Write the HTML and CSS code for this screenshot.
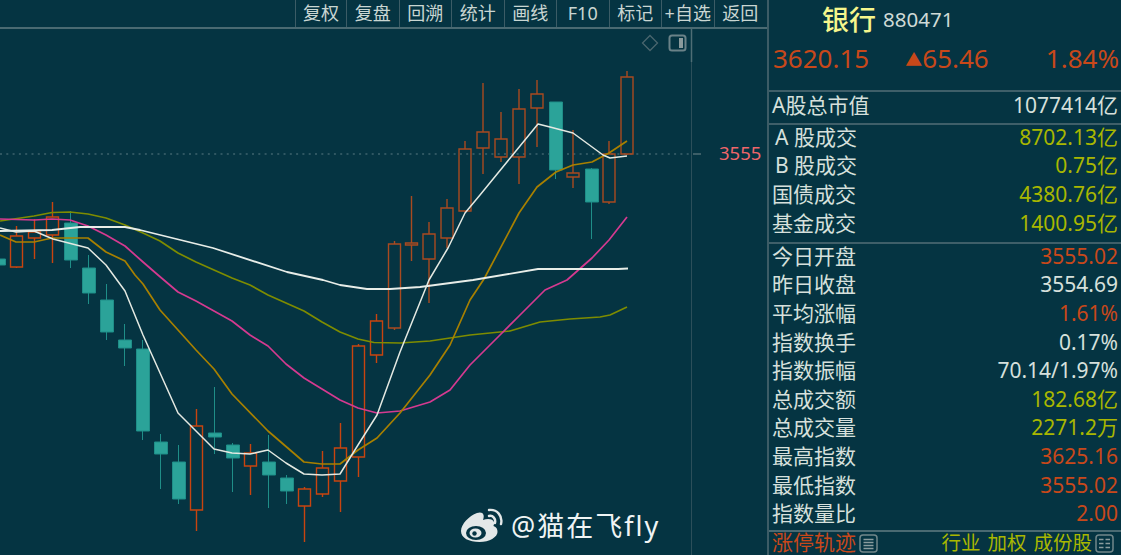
FILE: index.html
```html
<!DOCTYPE html>
<html lang="zh-CN">
<head>
  <meta charset="UTF-8">
  <title>银行 880471</title>
  <link rel="stylesheet" href="styles.css">
</head>
<body>

  <div class="main">
    <div class="toolbar">
      <span class="tool">复权</span>
      <span class="tool">复盘</span>
      <span class="tool">回溯</span>
      <span class="tool">统计</span>
      <span class="tool">画线</span>
      <span class="tool">F10</span>
      <span class="tool">标记</span>
      <span class="tool">+自选</span>
      <span class="tool">返回</span>
    </div>

    <svg class="chart" viewBox="0 29 767 526" width="767" height="526">
      <!-- axis -->
      <line class="axis" x1="691.5" y1="29" x2="691.5" y2="555"/>
      <line class="axis-top" x1="691.5" y1="29" x2="691.5" y2="62"/>
      <line class="axis-top" x1="693" y1="154" x2="701" y2="154"/>
      <line class="pre-close" x1="0" y1="154" x2="690" y2="154"/>
      <text class="price-label" x="719" y="159.500">3555</text>

      <!-- top right icons -->
      <path class="ico-diamond" d="M650 35.5l7.5 7.5-7.5 7.5-7.5-7.5z"/>
      <rect class="ico-panel" x="669.5" y="35.5" width="16" height="15" rx="2.5"/>
      <rect class="ico-panel-bar" x="679" y="38" width="4" height="10"/>

      <!-- candles -->
      <path class="down" d="M-1.5 259h7v6h-7z"/>
      <path class="up" d="M16.5 226V236M10.5 236h12v31h-12zM16.5 267v1"/>
      <path class="up" d="M34.5 219V232M28.5 232h12v6h-12zM34.5 238V259"/>
      <path class="up" d="M52.5 202V217M46.5 217h12v18h-12zM52.5 235V263"/>
      <path class="down" d="M70.5 211V223M64.5 223h13v37h-13zM70.5 260v8"/>
      <path class="down" d="M88.5 255V268M82.5 268h13v25h-13zM88.5 293V304"/>
      <path class="down" d="M106.5 284V300M100.5 300h13v32h-13zM106.5 332V340"/>
      <path class="down" d="M124.5 324V340M118.5 340h13v8h-13zM124.5 348V366"/>
      <path class="down" d="M142.5 340V349M136.5 349h13v82h-13zM142.5 431V440"/>
      <path class="down" d="M160.5 434V442M154.5 442h13v12h-13zM160.5 454V489"/>
      <path class="down" d="M178.5 445V462M172.5 462h13v37h-13zM178.5 499V504"/>
      <path class="up" d="M196.5 409V426M190.5 426h12v84h-12zM196.5 510V531"/>
      <path class="down" d="M214.5 387V433M208.5 433h13v4h-13zM214.5 437V454"/>
      <path class="down" d="M232.5 443V445M226.5 445h13v13h-13zM232.5 458V492"/>
      <path class="up" d="M250.5 444V453M244.5 453h12v13h-12zM250.5 466V495"/>
      <path class="down" d="M268.5 435V462M262.5 462h13v13h-13zM268.5 475V508"/>
      <path class="down" d="M286.5 475V478M280.5 478h13v13h-13zM286.5 491V504"/>
      <path class="up" d="M304.5 487V489M298.5 489h12v17h-12zM304.5 506V542"/>
      <path class="up" d="M322.5 451V468M316.5 468h12v26h-12zM322.5 494V497"/>
      <path class="up" d="M340.5 423V448M334.5 448h12v33h-12zM340.5 481V512"/>
      <path class="up" d="M358.5 344V346M352.5 346h12v111h-12zM358.5 457V477"/>
      <path class="up" d="M376.5 314V321M370.5 321h12v34h-12zM376.5 355V363"/>
      <path class="up up-dim" d="M394.5 241V244M388.5 244h12v84h-12zM394.5 328V330"/>
      <path class="up up-dim" d="M411.5 196V243M405.5 243h12v2h-12zM411.5 245V261"/>
      <path class="up up-dim" d="M429 222V234M423 234h12v25h-12zM429 259V303"/>
      <path class="up up-dim" d="M447 199V208M441 208h12v30h-12zM447 238V248"/>
      <path class="up up-dim" d="M465 141V149M459 149h12v62h-12zM465 211V212"/>
      <path class="up up-dim" d="M483 83V132M477 132h12v16h-12zM483 148V174"/>
      <path class="up up-dim" d="M501 112V139M495 139h12v18h-12zM501 157V162"/>
      <path class="up up-dim" d="M519 89V109M513 109h12v48h-12zM519 157V184"/>
      <path class="up up-dim" d="M537 80V94M531 94h12v14h-12zM537 108V147"/>
      <path class="down" d="M549.5 102h13v68h-13zM555.5 170V179"/>
      <path class="up up-dim" d="M573 130V173M567 173h12v4h-12zM573 177V188"/>
      <path class="down" d="M591.5 168V169M585.5 169h13v33h-13zM591.5 202V239"/>
      <path class="up up-dim" d="M609 141V154M603 154h12v48h-12zM609 202V204"/>
      <path class="up up-dim" d="M627 71V77M621 77h12v77h-12zM627 154V155"/>

      <!-- moving averages -->
      <polyline class="ma ma30" points="0,221 34,216 52,212.5 70,212 88,214 106,218 125,225 143,233 160,241 178,253 196,262 214,270 232,278 250,285 268,295 304,311 322,322 340,332 358,339 374,342.5 400,343 430,341 470,335 510,331 540,322 570,319 600,317 610,315 627,307"/>
      <polyline class="ma ma20" points="0,219 34,220 52,219 70,220 88,226 106,235 125,246 143,262 158,275 178,292 196,301 214,311 232,321 250,335 268,346 286,364 304,378 322,389 340,400 358,408 377,413 400,411 430,402 450,390 470,365 500,335 520,315 545,290 567,280 592,258 609,240 627,217"/>
      <polyline class="ma ma10" points="0,235 16,242 34,242 52,238 70,238 88,238 106,252 125,261 135,275 143,284 160,310 178,330 196,350 214,369 232,394 268,431 304,462 322,464 340,464 358,450 377,438 400,413 430,375 450,345 470,300 484,279 519,213 537,187 556,172 573,165 592,162 609,153 627,141"/>
      <polyline class="ma ma60" points="0,231 52,230 80,227 125,227 140,230 213,248 287,272 323,280 340,285 367,289 390,289 420,287 473,280 538,269 618,269 628,268.5"/>
      <polyline class="ma ma5" points="0,228 16,232 34,231 53,239 88,248 106,265 125,291 143,335 178,413 214,449 232,453 250,454 268,450 286,463 304,474 322,475 340,474 358,445 377,415 400,352 429,280 448,248 465,213 480,195 511,157 538,124 550,127 573,133 603,155 610,158 627,156"/>
    </svg>
  </div>

  <div class="side">
    <div class="title">
      <span class="name">银行</span>
      <span class="code">880471</span>
    </div>
    <div class="quote">
      <span>3620.15</span>
      <span class="change"><span class="arrow">▲</span>65.46</span>
      <span>1.84%</span>
    </div>

    <div class="group group-cap">
      <div class="row cap"><span>A股总市值</span><span>1077414亿</span></div>
    </div>

    <div class="group group-vol">
      <div class="row"><span class="lead">A 股成交</span><span class="yellow">8702.13亿</span></div>
      <div class="row"><span class="lead">B 股成交</span><span class="yellow">0.75亿</span></div>
      <div class="row"><span>国债成交</span><span class="yellow">4380.76亿</span></div>
      <div class="row"><span>基金成交</span><span class="yellow">1400.95亿</span></div>
    </div>

    <div class="group group-stats">
      <div class="row"><span>今日开盘</span><span class="red">3555.02</span></div>
      <div class="row"><span>昨日收盘</span><span>3554.69</span></div>
      <div class="row"><span>平均涨幅</span><span class="red">1.61%</span></div>
      <div class="row"><span>指数换手</span><span>0.17%</span></div>
      <div class="row"><span>指数振幅</span><span>70.14/1.97%</span></div>
      <div class="row"><span>总成交额</span><span class="yellow">182.68亿</span></div>
      <div class="row"><span>总成交量</span><span class="yellow">2271.2万</span></div>
      <div class="row"><span>最高指数</span><span class="red">3625.16</span></div>
      <div class="row"><span>最低指数</span><span class="red">3555.02</span></div>
      <div class="row"><span>指数量比</span><span class="red">2.00</span></div>
    </div>

    <div class="footer">
      <span class="red">涨停轨迹</span>
      <svg class="foot-ico" viewBox="0 0 19 19" width="19" height="19">
        <rect x="1" y="1" width="17" height="17" rx="3"/>
        <path d="M4.5 5.5h10M4.5 8.5h10M4.5 11.5h10M4.5 14.5h10"/>
      </svg>
      <span class="foot-links yellow">
        <span>行业</span>
        <span>加权</span>
        <span>成份股</span>
      </span>
      <svg class="foot-ico" viewBox="0 0 19 19" width="19" height="19">
        <rect x="1" y="1" width="17" height="17" rx="3"/>
        <path d="M4 5.5h4.5M10.500 5.5h4.500M4 9.500h4.500M10.500 9.500h4.500M4 13.500h4.500M10.500 13.500h4.500"/>
      </svg>
    </div>
  </div>

  <div class="watermark">
    <svg class="weibo" viewBox="0 0 44 34" width="44" height="34">
      <path class="weibo-body" d="M1 23C1 16 9 8 17 5c6-2 8 2 6 7 5-2 10-1 11 2 .5 2-.5 3-.5 4 3 1 4 3 4 6 0 5-8 10-18 10C9 34 1 30 1 23z"/>
      <ellipse class="weibo-eye" cx="16" cy="25" rx="10" ry="7"/>
      <ellipse class="weibo-pupil" cx="15.500" cy="25" rx="6" ry="4.500"/>
      <circle class="weibo-eye" cx="14.500" cy="25.500" r="2.200"/>
      <path class="weibo-arc" d="M29 2c8-1 14 6 12 14M29 8c4-1 7 3 6 7"/>
    </svg>
    <span class="handle">@猫在飞fly</span>
  </div>

</body>
</html>
```

FILE: styles.css
```css
body {
  margin: 0;
  width: 1121px;
  height: 555px;
  overflow: hidden;
  display: flex;
  position: relative;
  background: #053442;
  font-family: "Noto Sans", "Noto Sans CJK SC", sans-serif;
  color: #d6e0dc;
}

.main {
  width: 767px;
  border-right: 2px solid #3c5c66;
  display: flex;
  flex-direction: column;
  flex-shrink: 0;
}

.toolbar {
  height: 27px;
  border-bottom: 2px solid #4a6a72;
  padding-right: 1px;
  display: flex;
  justify-content: flex-end;
  font-size: 18px;
  line-height: 27px;
}

.tool {
  width: 52.5px;
  box-sizing: border-box;
  border-left: 1px solid #3c5c66;
  text-align: center;
  white-space: nowrap;
  color: #c9d6d2;
}

.tool:first-child {
  width: 51px;
}

.chart {
  display: block;
}

.axis {
  stroke: #2c4f5a;
  stroke-width: 1;
}

.axis-top {
  stroke: #4f6d75;
  stroke-width: 1.5;
}

.pre-close {
  stroke: #5a7a82;
  stroke-width: 1.2;
  stroke-dasharray: 2 4.3;
}

.price-label {
  fill: #f0666a;
  font-size: 18.5px;
}

.ico-diamond {
  fill: none;
  stroke: #4a666e;
  stroke-width: 1.3;
}

.ico-panel {
  fill: none;
  stroke: #6a8288;
  stroke-width: 2;
}

.ico-panel-bar {
  fill: #8a9a9c;
}

.up {
  fill: none;
  stroke: #c8440f;
  stroke-width: 1.4;
}

.up-dim {
  stroke: #a94a20;
}

.down {
  fill: #2ba399;
  stroke: #1f8e88;
  stroke-width: 1;
}

.ma {
  fill: none;
  stroke-width: 1.7;
  stroke-linejoin: round;
}

.ma5 {
  stroke: #e4e9e2;
  stroke-width: 1.5;
}

.ma10 {
  stroke: #a88000;
}

.ma20 {
  stroke: #d53a90;
}

.ma30 {
  stroke: #7e8c00;
}

.ma60 {
  stroke: #e8ede8;
  stroke-width: 1.8;
}

.side {
  flex: 1;
  display: flex;
  flex-direction: column;
  font-size: 21px;
}

.title {
  height: 37px;
  flex-shrink: 0;
  padding-left: 53px;
  display: flex;
  align-items: center;
  gap: 7px;
}

.name {
  font-size: 27px;
  font-weight: 500;
  color: #f6f68c;
}

.code {
  font-size: 20.5px;
  color: #cfdad6;
}

.quote {
  height: 53px;
  flex-shrink: 0;
  padding: 0 2px 0 4px;
  box-sizing: border-box;
  display: flex;
  justify-content: space-between;
  font-size: 26px;
  line-height: 42px;
  color: #c8481a;
}

.change {
  margin-right: 21px;
}

.arrow {
  font-size: 17px;
  vertical-align: 2px;
}

.group {
  flex-shrink: 0;
  border-top: 2px solid #3f5f69;
}

.group-cap {
  height: 31px;
}

.group-vol {
  height: 117px;
}

.group-stats {
  height: 286px;
}

.row {
  height: 28.6px;
  box-sizing: border-box;
  padding: 0 3px 4px 3px;
  display: flex;
  justify-content: space-between;
  align-items: center;
  white-space: nowrap;
  line-height: 1;
}

.row.cap {
  height: 31px;
}

.lead {
  margin-left: 3px;
}

.yellow {
  color: #a9b700;
}

.red {
  color: #c8481a;
}

.footer {
  height: 21px;
  flex-shrink: 0;
  border-top: 2px solid #4a6a72;
  padding: 0 7px 0 3px;
  display: flex;
  align-items: center;
  gap: 3px;
  line-height: 1;
}

.foot-links {
  margin-left: auto;
  display: flex;
  gap: 7px;
  font-size: 19.5px;
}

.foot-ico {
  margin-top: 1px;
}

.foot-ico rect {
  fill: none;
  stroke: #71868a;
  stroke-width: 1.5;
}

.foot-ico path {
  fill: none;
  stroke: #8a9c9e;
  stroke-width: 1.6;
}

.watermark {
  position: absolute;
  left: 460px;
  top: 505px;
  display: flex;
  align-items: center;
  gap: 7px;
  color: #f0f4f4;
}

.handle {
  font-size: 27px;
  letter-spacing: 2px;
}

.weibo {
  display: block;
}

.weibo-body, .weibo-pupil {
  fill: #e3e8e8;
}

.weibo-eye {
  fill: #053442;
}

.weibo-arc {
  fill: none;
  stroke: #e3e8e8;
  stroke-width: 2.4;
  stroke-linecap: round;
}
```
